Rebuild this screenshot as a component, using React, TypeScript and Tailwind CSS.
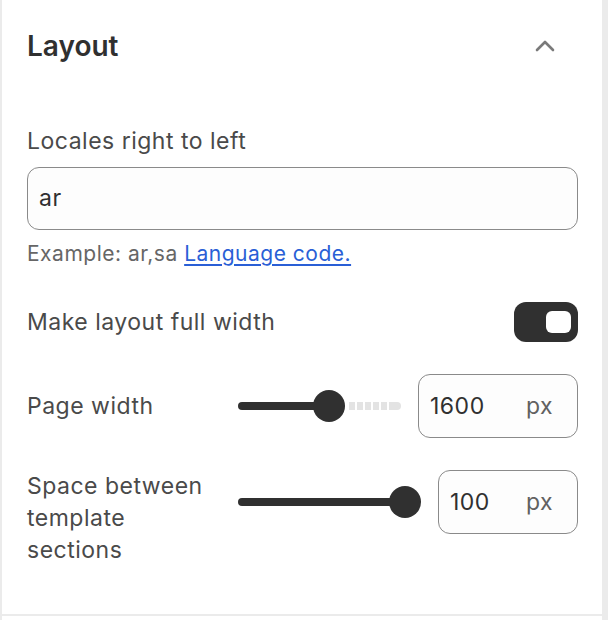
import React from "react";

function Slider({ pct }: { pct: number }) {
  const left = `calc(16px + (100% - 32px) * ${pct})`;
  return (
    <div className="relative flex-1 h-16">
      <div
        className="absolute top-[28px] h-[8px] right-0 flex"
        style={{ left: `calc(${left} + 20px)` }}
      >
        <div className="flex-1 h-full bg-[repeating-linear-gradient(90deg,#e3e3e3_0_6px,transparent_6px_8px)]" />
        <div className="w-[12px] h-full bg-[#e3e3e3] rounded-r-full" />
      </div>
      <div
        className="absolute top-[28px] h-[8px] left-0 bg-[#303030] rounded-l-full"
        style={{ width: left }}
      />
      <div
        className="absolute top-[16px] w-[32px] h-[32px] -ml-[16px] rounded-full bg-[#303030]"
        style={{ left }}
      />
    </div>
  );
}

function NumberField({ value, width }: { value: string; width: string }) {
  return (
    <div
      className={`${width} h-16 shrink-0 rounded-[12px] border border-[#8a8a8a] bg-[#fdfdfd] flex items-center justify-between pl-[11px] pr-[24px] text-[23px] tracking-[0.5px]`}
    >
      <span className="text-[#303030]">{value}</span>
      <span className="text-[#616161]">px</span>
    </div>
  );
}

export default function App() {
  return (
    <div
      className="w-[608px] h-[620px] bg-[#ebebeb] pl-[2px] pr-[6px] flex flex-col gap-[2px] overflow-hidden"
      style={{ fontFamily: "Inter, 'Noto Sans', sans-serif" }}
    >
      <div className="bg-white pt-[28px] pl-[25px] pr-[24px] pb-[48px] shrink-0">
        <div className="flex items-center justify-between h-9">
          <h2 className="text-[28px] leading-9 font-semibold text-[#303030]">Layout</h2>
          <svg width="20" height="12" viewBox="0 0 20 12" className="mr-[23px]">
            <path
              d="M2 10 L10 2 L18 10"
              fill="none"
              stroke="#7a7a7a"
              strokeWidth="2.6"
              strokeLinecap="round"
              strokeLinejoin="round"
            />
          </svg>
        </div>

        <div className="mt-[61px] text-[23px] tracking-[0.5px] leading-8 text-[#4a4a4a]">
          Locales right to left
        </div>
        <div className="mt-[10px] h-[63px] rounded-[12px] border border-[#8a8a8a] bg-[#fdfdfd] flex items-center pl-[11px] text-[23px] tracking-[0.5px] text-[#303030]">
          ar
        </div>
        <div className="mt-[10px] text-[21px] tracking-[0.5px] leading-7 text-[#666666]">
          Example: ar,sa{" "}
          <a className="text-[#2a5fd6] underline underline-offset-[3px]">Language code.</a>
        </div>

        <div className="mt-[34px] flex items-center justify-between">
          <span className="text-[23px] tracking-[0.5px] leading-8 text-[#4a4a4a]">
            Make layout full width
          </span>
          <div className="w-[64px] h-[40px] rounded-[12px] bg-[#303030] flex items-center justify-end pr-[7px]">
            <div className="w-[25px] h-[22px] rounded-[6px] bg-white" />
          </div>
        </div>

        <div className="mt-[32px] flex items-center gap-[17px]">
          <span className="w-[194px] shrink-0 text-[23px] tracking-[0.5px] leading-8 text-[#4a4a4a]">
            Page width
          </span>
          <Slider pct={0.57} />
          <NumberField value="1600" width="w-[160px]" />
        </div>

        <div className="mt-[32px] flex items-start gap-[17px]">
          <span className="w-[194px] shrink-0 pr-[12px] text-[23px] tracking-[0.5px] leading-8 text-[#4a4a4a]">
            Space between template sections
          </span>
          <Slider pct={1} />
          <NumberField value="100" width="w-[140px]" />
        </div>
      </div>
      <div className="bg-white flex-1" />
    </div>
  );
}
